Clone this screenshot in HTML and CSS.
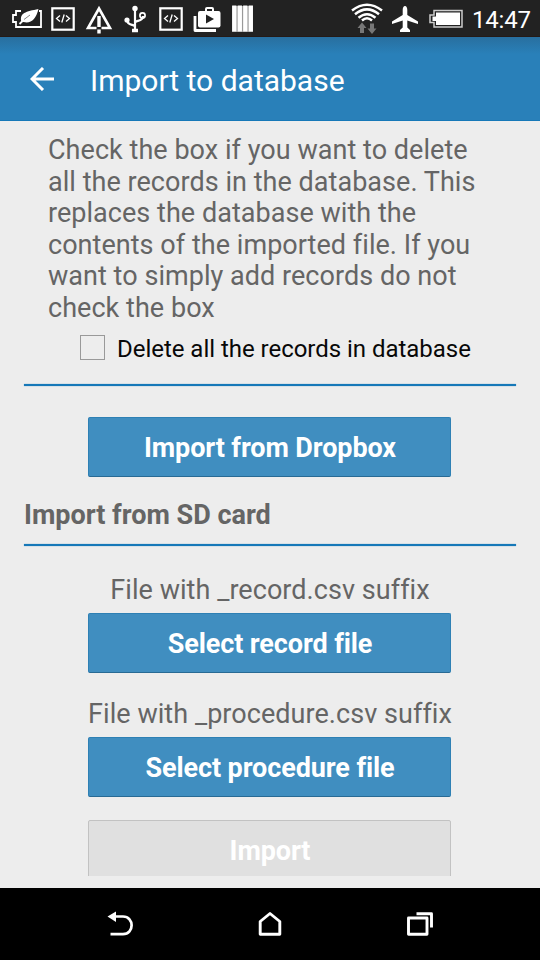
FILE: index.html
```html
<!DOCTYPE html>
<html lang="en">
<head>
<meta charset="utf-8">
<title>Import to database</title>
<link rel="stylesheet" href="styles.css">
</head>
<body>
<div class="screen">
  <div class="status">
    <svg class="status-icons" width="260" height="37" viewBox="0 0 260 37" fill="none" stroke="#fff" stroke-width="2">
      <path d="M21 11H16V15H13V22H16V27H41V11H39" stroke-width="1.8"/>
      <path d="M21.500 22C19 13 26 11.500 38.500 9C36 19 31 24 23.500 22Z" fill="#fff" stroke="none"/>
      <path d="M24 19.500L30 15" stroke="#666" stroke-width=".8"/>
      <path d="M19.500 24L23 20.500" stroke-width="1.8"/>
      <g id="code"><rect x="52.3" y="8.3" width="21.4" height="21.4" stroke-width="2.2"/><path d="M60 15.500L56.500 18.500L60 21.500M66 15.500L69.500 18.500L66 21.500M64.200 14.500L61.800 22.500" stroke-width="1.3"/></g>
      <path d="M96.500 28H88L99 8.500L110 28H101.500" stroke-width="2.6"/>
      <path d="M99 16V27M99 29.500V33.500" stroke-width="3.400"/>
      <path d="M135 10V31M135 27C135 24 127 26 127 20M135 23C135 20 143 22 143 16" stroke-width="2.2"/>
      <circle cx="135" cy="8.500" r="2.700" fill="#fff" stroke="none"/><circle cx="127" cy="20" r="2.600" fill="#fff" stroke="none"/><circle cx="142.500" cy="15.500" r="2.600" stroke-width="1.7"/><path d="M132 30.500H138" stroke-width="3.500"/>
      <use href="#code" x="108"/>
      <path d="M195 16V30.500H216" stroke-width="2.800" stroke-linejoin="round"/>
      <path d="M206 12V9Q206 8 207 8H212Q213 8 213 9V12" stroke-width="2"/>
      <rect x="198" y="11" width="22.500" height="16.500" rx="2" fill="#fff" stroke="none"/><path d="M206 14.500V23.500L214 19Z" fill="#222" stroke="none"/>
      <path d="M232 6H253V32H232Z" fill="#999" stroke="none"/>
      <path d="M234.300 5.500V31.500M239.800 5.500V31.500M245.300 5.500V31.500M250.800 5.500V31.500" stroke-width="4.300"/>
    </svg>
    <svg class="signal-icons" width="125" height="37" viewBox="340 0 125 37" fill="none" stroke="#fff">
      <path d="M352 10.500Q367 -1 382 10.500M355 14.300Q367 4.500 379 14.300M358.500 17.700Q367 10.700 375.500 17.700" stroke-width="2.500"/>
      <path d="M362 20.500Q367 16 372 20.500" stroke-width="2.500"/>
      <path d="M357.500 28L362 22.500L366.500 28H364V33H360V28ZM367.500 28.500L372 34L376.500 28.500H374V23.500H370V28.500Z" fill="#777" stroke="none"/>
      <path d="M405 6C406.500 6 407.300 8 407.300 10V15L418 21.500V24L407.300 20.500V27.500L410 30V32H400V30L402.700 27.500V20.500L392 24V21.500L402.700 15V10C402.700 8 403.500 6 405 6Z" fill="#fff" stroke="none"/>
      <path d="M434 10.500H462V27H434V22.500H430V15H434Z" stroke="#ccc" stroke-width="1.500"/><path d="M436 12.500H460V25H436V21H432.500V16.500H436Z" fill="#fff" stroke="none"/>
    </svg>
    <span class="clock">14:47</span>
  </div>
  <header class="bar">
    <svg class="back" width="24" height="24" viewBox="0 0 24 24" fill="none" stroke="#fff" stroke-width="3"><path d="M24 12H2M13 1L2 12L13 23"/></svg>
    <h1 class="title">Import to database</h1>
  </header>
  <main class="content">
    <p class="intro">Check the box if you want to delete<br>all the records in the database. This<br>replaces the database with the<br>contents of the imported file. If you<br>want to simply add records do not<br>check the box</p>
    <div class="option"><span class="box"></span><span class="option-label">Delete all the records in database</span></div>
    <div class="rule"></div>
    <div class="button first">Import from Dropbox</div>
    <h2 class="section">Import from SD card</h2>
    <div class="rule"></div>
    <p class="hint hint-record">File with _record.csv suffix</p>
    <div class="button">Select record file</div>
    <p class="hint hint-procedure">File with _procedure.csv suffix</p>
    <div class="button">Select procedure file</div>
    <div class="button disabled">Import</div>
  </main>
  <nav class="nav">
    <svg width="30" height="30" viewBox="105 909 30 30" fill="none" stroke="#fff" stroke-width="2.700"><path d="M112 916.500H123C134.500 916.500 134.500 934.200 123 934.200H110.500"/><path d="M107.500 916.500L116 911.500V922Z" fill="#fff" stroke="none"/></svg>
    <svg width="30" height="30" viewBox="255 909 30 30" fill="none" stroke="#fff" stroke-width="2.900" stroke-linejoin="round"><path d="M260.200 934.300V921.500L270 913.500L279.800 921.500V934.300Z"/></svg>
    <svg width="30" height="30" viewBox="405 909 30 30" fill="none" stroke="#fff" stroke-width="2.900" stroke-linejoin="round"><rect x="408.500" y="918" width="18.500" height="16.300"/><path d="M416.500 913.800H431.500V927.500"/></svg>
  </nav>
</div>
</body>
</html>
```
FILE: styles.css
```css
* { box-sizing: border-box; }
body { margin: 0; font-family: Roboto, sans-serif; font-variant-ligatures: none; }
h1, h2, p { margin: 0; font-weight: 400; }
svg { display: block; flex: none; }
.screen { width: 540px; height: 960px; display: flex; flex-direction: column; background: #ededed; overflow: hidden; }
.status { height: 37px; flex: none; display: flex; background: #222; border-bottom: 1px solid #241a17; color: #fff; }
.signal-icons { margin-left: 80px; }
.clock { margin-left: 7px; font-size: 24px; line-height: 40px; white-space: nowrap; letter-spacing: -0.2px; }
.bar { height: 84px; flex: none; display: flex; align-items: center; padding-left: 30px; background: linear-gradient(#286f9f 0, #2980b9 17px); border-bottom: 1px solid #1678b8; color: #fff; }
.back { margin-top: 1px; }
.title { margin-left: 36px; padding-top: 4px; font-size: 30px; line-height: 36px; white-space: nowrap; }
.content { height: 755px; flex: none; margin-bottom: 12px; padding: 14px 24px 0; overflow: hidden; }
.intro { height: 189px; margin-left: 24px; color: #656565; font-size: 27px; line-height: 31.5px; white-space: nowrap; letter-spacing: 0.04px; }
.option { height: 60px; display: flex; padding: 11px 0 0 56px; }
.box { width: 25px; height: 25px; border: 1px solid #999; }
.option-label { margin-left: 12px; font-size: 24px; line-height: 28px; color: #080808; white-space: nowrap; letter-spacing: -0.03px; }
.rule { height: 2px; background: #1678b8; box-shadow: 0 0 1px #1678b8; }
.button { width: 363px; height: 60px; margin: 0 0 0 64px; padding-left: 1px; border: 1px solid #2e80b4; border-bottom-color: #286a94; border-radius: 2px; background: #408ec0; color: #fff; font-size: 27px; font-weight: 700; line-height: 60px; text-align: center; white-space: nowrap; letter-spacing: -0.1px; }
.first { margin-top: 31px; }
.section { height: 67px; padding-top: 22px; color: #656565; font-size: 27px; font-weight: 700; line-height: 32px; white-space: nowrap; }
.hint { color: #656565; font-size: 27px; line-height: 32px; text-align: center; white-space: nowrap; letter-spacing: 0.05px; }
.hint-record { margin: 28px 0 7px; }
.hint-procedure { margin: 25px 0 7px; }
.disabled { margin-top: 23px; border-color: #c2c2c2; background: #e0e0e0; }
.nav { height: 72px; flex: none; display: flex; justify-content: center; gap: 120px; padding-top: 21px; background: #000; }
```
